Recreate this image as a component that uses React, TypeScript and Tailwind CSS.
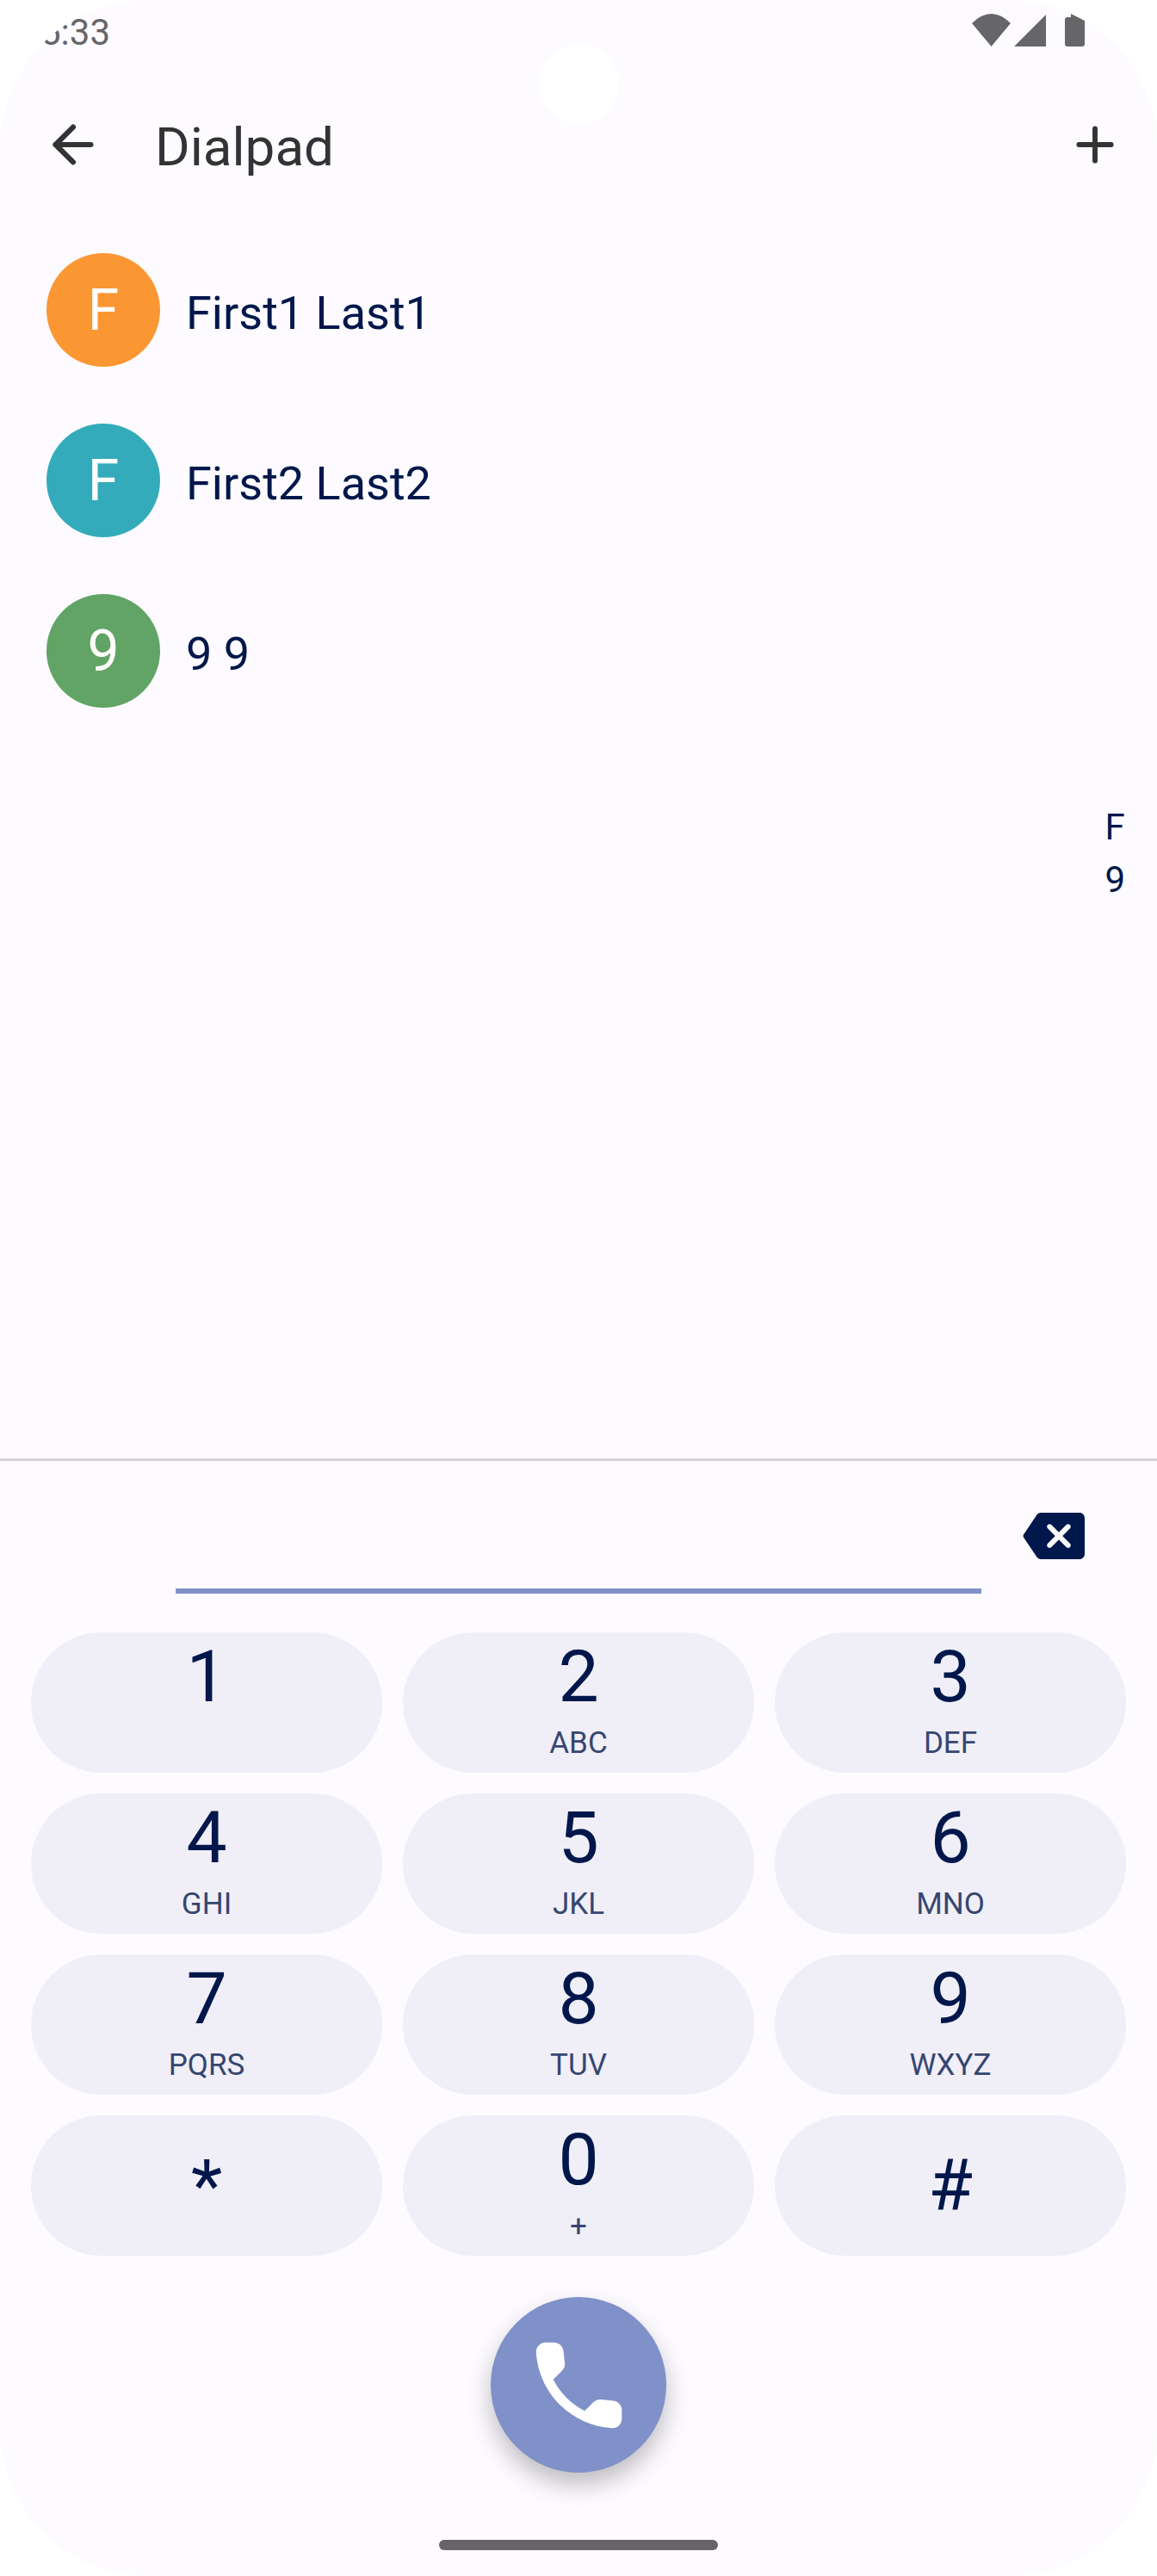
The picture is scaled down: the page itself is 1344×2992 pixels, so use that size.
import { ArrowLeft, Plus } from 'lucide-react'

const contacts = [
  { initial: 'F', name: 'First1 Last1', tone: 'bg-[#fb9733]' },
  { initial: 'F', name: 'First2 Last2', tone: 'bg-[#34abba]' },
  { initial: '9', name: '9 9', tone: 'bg-[#61a465]' },
]

const keys = [
  { digit: '1', letters: '' },
  { digit: '2', letters: 'ABC' },
  { digit: '3', letters: 'DEF' },
  { digit: '4', letters: 'GHI' },
  { digit: '5', letters: 'JKL' },
  { digit: '6', letters: 'MNO' },
  { digit: '7', letters: 'PQRS' },
  { digit: '8', letters: 'TUV' },
  { digit: '9', letters: 'WXYZ' },
  { digit: '*', letters: '' },
  { digit: '0', letters: '+' },
  { digit: '#', letters: '' },
]

function StatusBar() {
  return (
    <div className="flex h-[84px] shrink-0 items-start justify-between pt-[17px] pl-[47px] pr-[84px] text-[#666568]">
      <span className="text-[42px] leading-[42px]">5:33</span>
      <div className="-mt-px flex items-start">
        <svg width="46" height="38" viewBox="0 0 46 38" fill="currentColor">
          <path d="M22.5 38 L0 11 Q22.5 -11 45 11 Z" />
        </svg>
        <svg className="ml-[3px]" width="37" height="38" viewBox="0 0 37 38" fill="currentColor">
          <path d="M37 1 V38 H0 Z" />
        </svg>
        <svg className="ml-[22px]" width="23" height="38" viewBox="0 0 23 38" fill="currentColor">
          <path d="M7 0 L23 8 V35 Q23 38 20 38 H3 Q0 38 0 35 V7 Q0 4 3 4 H7 Z" />
        </svg>
      </div>
    </div>
  )
}

function AppBar() {
  return (
    <div className="flex h-[168px] shrink-0 items-center pl-[50px] pr-[40px] text-[#333333]">
      <ArrowLeft size={70} strokeWidth={2.1} />
      <h1 className="mt-[5px] ml-[60px] flex-1 text-[62px] leading-none font-normal">Dialpad</h1>
      <Plus size={64} strokeWidth={2.2} />
    </div>
  )
}

function ContactList() {
  return (
    <div className="relative flex-1">
      <div className="pt-[9px]">
        {contacts.map((c) => (
          <div key={c.name} className="flex h-[198px] items-center pl-[54px]">
            <div className={`flex h-[132px] w-[132px] items-center justify-center rounded-full text-[66px] text-white ${c.tone}`}>
              {c.initial}
            </div>
            <span className="mt-[8px] ml-[30px] text-[54px] leading-none text-[#00174b]">{c.name}</span>
          </div>
        ))}
      </div>
      <div className="absolute right-[37px] top-[678px] flex flex-col items-center text-[42px] leading-[61px] text-[#00174b]">
        <span>F</span>
        <span>9</span>
      </div>
    </div>
  )
}

function DialInput() {
  return (
    <div className="shrink-0">
      <div className="flex justify-end pt-[51px] pr-[84px]">
        <svg className="h-[72px] w-[72px] text-[#00174b]" viewBox="0 0 24 24" fill="currentColor">
          <path d="M22 3H7c-.69 0-1.23.35-1.59.88L.37 11.45c-.22.34-.22.77 0 1.11l5.04 7.56c.36.52.9.88 1.59.88h15c1.1 0 2-.9 2-2V5c0-1.1-.9-2-2-2zm-3.7 13.3c-.39.39-1.02.39-1.41 0L14 13.41l-2.89 2.89c-.39.39-1.02.39-1.41 0-.39-.39-.39-1.02 0-1.41L12.59 12 9.7 9.11c-.39-.39-.39-1.02 0-1.41.39-.39 1.02-.39 1.41 0L14 10.59l2.89-2.89c.39-.39 1.02-.39 1.41 0 .39.39.39 1.02 0 1.41L15.41 12l2.89 2.89c.38.38.38 1.02 0 1.41z" />
        </svg>
      </div>
      <div className="mt-[25px] ml-[204px] h-[6px] w-[936px] bg-[#7f91c8]" />
    </div>
  )
}

function Keypad() {
  return (
    <div className="mt-[45px] grid shrink-0 grid-cols-3 gap-6 px-[36px]">
      {keys.map((k) => {
        const symbol = k.digit === '*' || k.digit === '#'
        return (
          <button
            key={k.digit}
            className={`flex h-[163px] flex-col items-center rounded-full bg-[#f0eff8] text-[#00174b] ${symbol ? 'justify-center' : 'pt-[10px]'}`}
          >
            <span className="text-[84px] leading-[84px]">{k.digit}</span>
            {k.letters && <span className="mt-[14px] text-[35px] leading-[42px] text-[#364670]">{k.letters}</span>}
          </button>
        )
      })}
    </div>
  )
}

function CallButton() {
  return (
    <div className="mt-[48px] flex shrink-0 justify-center">
      <button className="flex h-[204px] w-[204px] items-center justify-center rounded-full bg-[#7f91c8] shadow-[0_14px_28px_rgba(0,0,0,0.25)]">
        <svg className="h-[133px] w-[133px] text-white" viewBox="0 0 24 24" fill="currentColor">
          <path d="M19.23 15.26l-2.54-.29c-.61-.07-1.21.14-1.64.57l-1.84 1.84c-2.83-1.44-5.15-3.75-6.59-6.59l1.85-1.85c.43-.43.64-1.03.57-1.64l-.29-2.52c-.12-1.01-.97-1.77-1.99-1.77H5.03c-1.13 0-2.07.94-2 2.07.53 8.54 7.36 15.36 15.89 15.89 1.13.07 2.07-.87 2.07-2v-1.73c.01-1.01-.75-1.86-1.76-1.98z" />
        </svg>
      </button>
    </div>
  )
}

export default function App() {
  return (
    <div className="h-[2992px] w-[1344px] bg-white font-['Roboto',sans-serif]">
      <div className="relative flex h-full flex-col overflow-hidden rounded-[171px] bg-[#fdfbff]">
        <div className="absolute left-[626px] top-[52px] h-[92px] w-[92px] rounded-full bg-white" />
        <StatusBar />
        <AppBar />
        <ContactList />
        <div className="h-[3px] shrink-0 bg-[#d3d1d4]" />
        <DialInput />
        <Keypad />
        <CallButton />
        <div className="mt-[78px] mb-[30px] h-[12px] w-[324px] shrink-0 self-center rounded-full bg-[#666468]" />
      </div>
    </div>
  )
}
